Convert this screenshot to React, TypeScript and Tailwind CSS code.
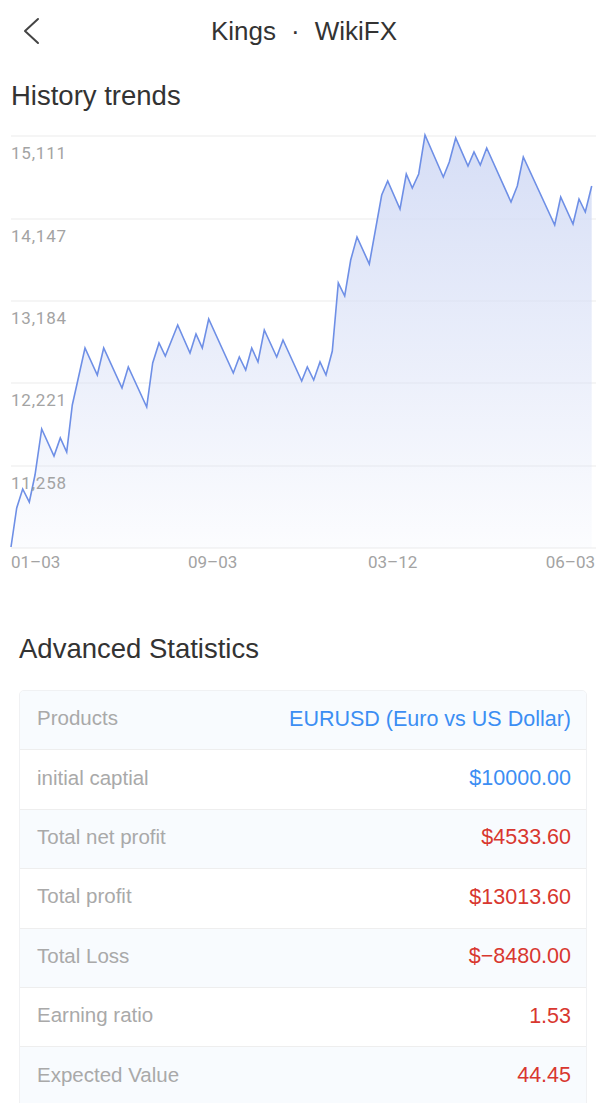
import React from "react";

const pts: [number, number][] = [
  [11, 547], [16.7, 508], [22.7, 489], [29.3, 502], [35, 475], [41.7, 429], [54, 456], [60.3, 438],
  [66.7, 452], [72.3, 405], [85, 348], [97.3, 375], [103.7, 348], [122, 388], [128.3, 367], [146.7, 407],
  [152.7, 363], [159, 343], [165.3, 356], [177.7, 325], [190, 353], [196, 334], [202.3, 348], [208.7, 319],
  [233.3, 373], [239.3, 357], [245.7, 370], [251.7, 348], [258, 362], [264.3, 330], [276.7, 357], [283, 340],
  [301.7, 381], [307.3, 367], [313.7, 380], [320, 362], [326, 375], [332.3, 351], [338.3, 283], [344.7, 296],
  [350.7, 260], [357, 237], [369.3, 264], [381.7, 195], [387.7, 181], [400, 209], [406.3, 174], [412.3, 188],
  [418.7, 174], [425, 135], [443.3, 177], [449.3, 162], [455.7, 138], [468, 166], [474, 152], [480.3, 165],
  [486.7, 148], [511, 202], [517.3, 186], [523.3, 157], [554.7, 225], [560.7, 197], [573, 224], [579, 199],
  [585.3, 212], [591.7, 186],
];

const grid = [
  { y: 136, label: "15,111" },
  { y: 219, label: "14,147" },
  { y: 301, label: "13,184" },
  { y: 383, label: "12,221" },
  { y: 466, label: "11,258" },
];

const rows = [
  { label: "Products", value: "EURUSD (Euro vs US Dollar)", tone: "blue" },
  { label: "initial captial", value: "$10000.00", tone: "blue" },
  { label: "Total net profit", value: "$4533.60", tone: "red" },
  { label: "Total profit", value: "$13013.60", tone: "red" },
  { label: "Total Loss", value: "$\u22128480.00", tone: "red" },
  { label: "Earning ratio", value: "1.53", tone: "red" },
  { label: "Expected Value", value: "44.45", tone: "red" },
];

function TrendChart() {
  const line = pts.map(([x, y], i) => `${i ? "L" : "M"}${x} ${y}`).join(" ");
  const area = `${line} L${pts[pts.length - 1][0]} 548 L11 548 Z`;
  return (
    <svg width="598" height="460" viewBox="0 120 598 460" className="block">
      <defs>
        <linearGradient id="fillGrad" x1="0" y1="135" x2="0" y2="548" gradientUnits="userSpaceOnUse">
          <stop offset="0" stopColor="#d6def6" />
          <stop offset="1" stopColor="#d6def6" stopOpacity="0.08" />
        </linearGradient>
      </defs>
      {grid.map((g) => (
        <line key={g.y} x1="11" x2="596" y1={g.y} y2={g.y} stroke="#ebebeb" strokeWidth="1" />
      ))}
      <line x1="11" x2="596" y1="548" y2="548" stroke="#ebebeb" strokeWidth="1" />
      <path d={area} fill="url(#fillGrad)" />
      <path d={line} fill="none" stroke="#6e8fe6" strokeWidth="1.6" strokeLinejoin="miter" />
      <g fontFamily="Roboto, 'Noto Sans', sans-serif" fontSize="17" fill="#a3a3a3">
        {grid.map((g) => (
          <text key={g.label} x="11" y={g.y + 23} letterSpacing="0.8">
            {g.label}
          </text>
        ))}
        <text x="11" y="568">01–03</text>
        <text x="188" y="568">09–03</text>
        <text x="368" y="568">03–12</text>
        <text x="595" y="568" textAnchor="end">06–03</text>
      </g>
    </svg>
  );
}

export default function App() {
  return (
    <div className="w-[598px] min-h-[1103px] bg-white text-[#333] font-['Liberation_Sans','Noto_Sans',sans-serif] overflow-hidden">
      <header className="relative h-[62px] flex items-center justify-center">
        <svg className="absolute left-[20px] top-[17px]" width="22" height="28" viewBox="0 0 22 28" fill="none">
          <path d="M18 2 L5 14 L18 26" stroke="#444" strokeWidth="2" strokeLinecap="round" strokeLinejoin="round" />
        </svg>
        <h1 className="flex items-center gap-[15px] pl-[10px] text-[26px] leading-[32px] text-[#333]">
          <span>Kings</span>
          <span>·</span>
          <span>WikiFX</span>
        </h1>
      </header>

      <h2 className="px-[11px] pt-[18px] pb-[8px] text-[27.5px] leading-[32px] text-[#333]">History trends</h2>

      <TrendChart />

      <h2 className="px-[19px] mt-[53px] mb-[25px] text-[27.5px] leading-[32px] text-[#333]">Advanced Statistics</h2>

      <div className="mx-[19px] w-[568px] rounded-[5px] border border-[#f0f1f3] overflow-hidden">
        {rows.map((r, i) => (
          <div
            key={r.label}
            className={`h-[59.4px] flex items-center justify-between pl-[17px] pr-[15px] pb-[3px] border-b border-[#eeeeee] ${
              i % 2 === 0 ? "bg-[#f8fbfe]" : "bg-white"
            }`}
          >
            <span className="text-[20.5px] text-[#a9a9a9]">{r.label}</span>
            <span className={`text-[21.5px] ${r.tone === "blue" ? "text-[#3c8ef3]" : "text-[#d8372f]"}`}>{r.value}</span>
          </div>
        ))}
      </div>
    </div>
  );
}
